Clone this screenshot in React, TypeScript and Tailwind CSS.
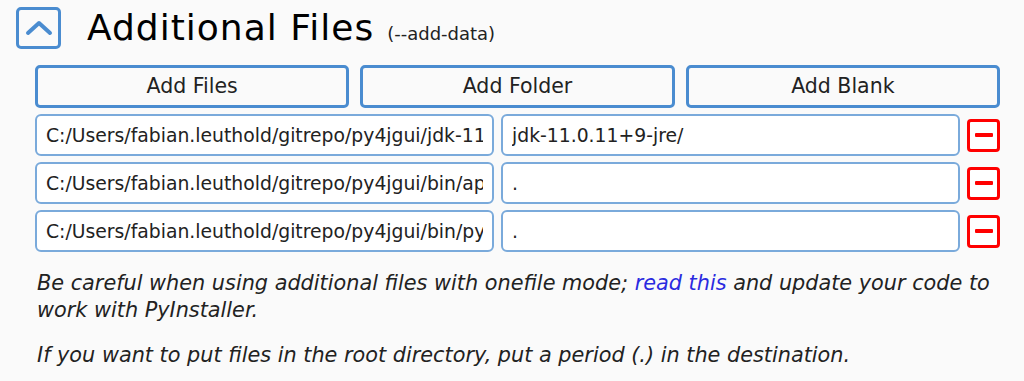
const rows = [
  { src: 'C:/Users/fabian.leuthold/gitrepo/py4jgui/jdk-11.0.11+9-jre', dest: 'jdk-11.0.11+9-jre/' },
  { src: 'C:/Users/fabian.leuthold/gitrepo/py4jgui/bin/app.jar', dest: '.' },
  { src: 'C:/Users/fabian.leuthold/gitrepo/py4jgui/bin/py4j.jar', dest: '.' },
];

function RemoveButton() {
  return (
    <button className="flex h-[33px] w-[33px] items-center justify-center rounded-[4px] border-[3px] border-[#ff0000] bg-white">
      <span className="block h-[4px] w-[18px] rounded-[1px] bg-[#ff0000]" />
    </button>
  );
}

export default function App() {
  return (
    <div className="h-[381px] w-[1024px] overflow-hidden bg-[#fafafa] font-['DejaVu_Sans',sans-serif] text-[#222]">
      {/* Section header */}
      <div className="flex items-center pl-[16px] pt-[7px]">
        <div className="flex h-[42px] w-[45px] items-center justify-center rounded-[5px] border-[3px] border-[#4a8cd0]">
          <svg width="28" height="16" viewBox="0 0 28 16" fill="none">
            <polyline
              points="3,13 14,3 25,13"
              stroke="#4a8cd0"
              strokeWidth="4"
              strokeLinecap="round"
              strokeLinejoin="round"
            />
          </svg>
        </div>
        <h2 className="ml-[26px] text-[36px] leading-none tracking-[1px] text-black">Additional Files</h2>
        <span className="ml-[13px] mt-[12px] text-[18px] leading-none">(--add-data)</span>
      </div>

      <div className="pl-[35px] pr-[24px]">
        {/* Add buttons */}
        <div className="mt-[16px] grid grid-cols-3 gap-[11px]">
          {['Add Files', 'Add Folder', 'Add Blank'].map((label) => (
            <button
              key={label}
              className="h-[43px] rounded-[5px] border-[3px] border-[#4a8cd0] bg-[#fafafa] text-[20.5px] text-[#222]"
            >
              {label}
            </button>
          ))}
        </div>

        {/* File rows */}
        <div className="mt-[6px] flex flex-col gap-[6px]">
          {rows.map((r, i) => (
            <div key={i} className="grid grid-cols-[1fr_1fr_33px] items-center gap-x-[7px]">
              <input
                readOnly
                value={r.src}
                className="h-[42px] w-full rounded-[6px] border-[2px] border-[#7aaadb] bg-white px-[9px] text-[18.8px] text-[#222] outline-none"
              />
              <input
                readOnly
                value={r.dest}
                className="h-[42px] w-full rounded-[6px] border-[2px] border-[#7aaadb] bg-white px-[9px] text-[18.8px] text-[#222] outline-none"
              />
              <RemoveButton />
            </div>
          ))}
        </div>

        {/* Notes */}
        <p className="mt-[18px] pl-[2px] text-[20.8px] italic leading-[27px]">
          Be careful when using additional files with onefile mode;{' '}
          <a className="text-[#2a2ae0]" href="#">
            read this
          </a>{' '}
          and update your code to work with PyInstaller.
        </p>
        <p className="mt-[18px] pl-[2px] text-[20.8px] italic leading-[27px]">
          If you want to put files in the root directory, put a period (.) in the destination.
        </p>
      </div>
    </div>
  );
}
